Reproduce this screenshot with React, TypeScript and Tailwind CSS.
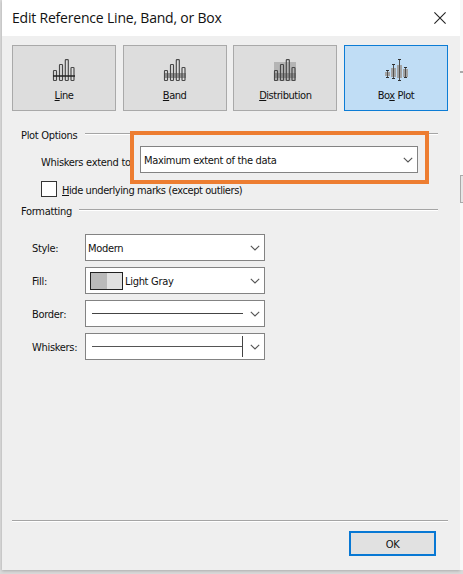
import type { ReactNode } from 'react';

type Kind = 'line' | 'band' | 'distribution' | 'box';

function ChartIcon({ kind }: { kind: Kind }) {
  if (kind === 'box') {
    const boxes = [
      [1, 11, 19, 13, 17],
      [7, 5, 20, 9, 18],
      [13, 0, 22, 6, 19],
      [19, 8, 19, 10, 18],
    ];
    return (
      <svg width="24" height="23" viewBox="0 0 24 23" shapeRendering="crispEdges">
        {boxes.map(([x, top, bottom, a, b]) => (
          <g key={x}>
            <rect x={x} y={a} width="5" height={b - a} fill="#a3a3a3" />
            <path d={`M${x + 2.5} ${top}V${bottom}`} stroke="#505050" />
            <path d={`M${x + 1} ${top + 0.5}h3M${x + 1} ${bottom - 0.5}h3`} stroke="#303030" />
          </g>
        ))}
      </svg>
    );
  }
  return (
    <svg width="24" height="23" viewBox="0 0 24 23" fill="none">
      {kind === 'distribution' && (
        <>
          <path d="M1 3h22v11H1z" fill="#b5b5b5" />
          <path d="M1 14h22v5H1z" fill="#8b8b8b" />
          <path d="M1 19h22v3H1z" fill="#b5b5b5" />
        </>
      )}
      {kind === 'band' && <path d="M1 14h22v5H1z" fill="#929292" />}
      <g stroke="#484848" strokeWidth="1.15">
        <rect x="1.5" y="11.5" width="3" height="10" rx=".7" />
        <rect x="7.5" y="5.5" width="3" height="16" rx=".7" />
        <rect x="13.3" y="0.6" width="3" height="20.9" rx=".7" />
        <rect x="19" y="8.5" width="3" height="13" rx=".7" />
      </g>
      {kind === 'line' && <path d="M1 17h22" stroke="#222" strokeWidth="1.5" />}
    </svg>
  );
}

function TypeButton({ kind, selected, children }: { kind: Kind; selected?: boolean; children: ReactNode }) {
  return (
    <button
      className={`flex h-[66px] w-[104px] flex-col items-center border pt-[13px] ${
        selected ? 'border-[#0c7cd5] bg-[#c0ddf5]' : 'border-[#a9a9a9] bg-[#dddddd]'
      }`}
    >
      <ChartIcon kind={kind} />
      <span className="mt-[6px] leading-[16px] tracking-[-0.45px]">{children}</span>
    </button>
  );
}

function Chevron() {
  return (
    <svg className="shrink-0" width="10" height="6" viewBox="0 0 10 6" fill="none">
      <path d="M.8.8 5 5 9.2.8" stroke="#555" strokeWidth="1.1" />
    </svg>
  );
}

function Select({ children }: { children: ReactNode }) {
  return (
    <div className="flex h-[27px] w-[180px] items-center border border-[#838383] bg-white pr-1">
      <div className="flex h-full flex-1 items-center whitespace-nowrap">{children}</div>
      <Chevron />
    </div>
  );
}

function Divider() {
  return <div className="-mt-[5px] h-[2px] flex-1 border-t border-[#a5a5a5] bg-white" />;
}

function Field({ label, children }: { label: string; children: ReactNode }) {
  return (
    <div className="flex items-center">
      <span className="w-[53px] whitespace-nowrap pt-[3px]">{label}</span>
      <Select>{children}</Select>
    </div>
  );
}

export default function App() {
  return (
    <div className="flex h-[574px] w-[463px] overflow-hidden bg-[#dadada] pl-[2px] font-['DejaVu_Sans_Condensed','DejaVu_Sans',sans-serif] text-[11px] leading-[16px] tracking-[-0.3px] text-[#111]">
      <div className="flex h-[570px] w-[458px] shrink-0 flex-col bg-[#efefef] shadow-[0_1px_3px_#aaa]">
        <header className="flex h-[36px] shrink-0 items-center justify-between bg-white pl-[10px] pr-[14px]">
          <h1 className="whitespace-nowrap font-['Open_Sans',sans-serif] text-[14px] leading-[20px] tracking-[-0.2px]">
            Edit Reference Line, Band, or Box
          </h1>
          <svg width="12" height="12" viewBox="0 0 12 12">
            <path d="m.4.4 11.2 11.2M11.6.4.4 11.6" stroke="#222" strokeWidth="1.1" />
          </svg>
        </header>

        <div className="ml-[10px] mt-[9px] flex w-[436px] justify-between self-start font-stretch-condensed">
          <TypeButton kind="line"><u>L</u>ine</TypeButton>
          <TypeButton kind="band"><u>B</u>and</TypeButton>
          <TypeButton kind="distribution"><u>D</u>istribution</TypeButton>
          <TypeButton kind="box" selected>Bo<u>x</u> Plot</TypeButton>
        </div>

        <main className="font-stretch-condensed">
          <div className="ml-[19px] mt-[17px] flex w-[417px] items-center">
            <span className="w-[64px] whitespace-nowrap">Plot Options</span>
            <Divider />
          </div>

          <div className="-mt-[13px] ml-[39px] flex h-[52px] items-center">
            <span className="w-[89px] whitespace-nowrap pt-[11px]">Whiskers extend to</span>
            <div className="flex h-[53px] w-[299px] items-center border-[4px] border-[#ed7d31] pl-[6px] pt-[5px]">
              <div className="flex h-[27px] w-[278px] items-center justify-between border border-[#838383] bg-white pl-[3px] pr-1">
                <span className="whitespace-nowrap pt-[3px] tracking-[-0.34px]">Maximum extent of the data</span>
                <Chevron />
              </div>
            </div>
          </div>

          <label className="-mt-[2px] ml-[39px] flex h-[16px] items-center">
            <span className="size-[16px] border border-[#333] bg-white" />
            <span className="ml-[5px] whitespace-nowrap pt-[3px] tracking-[-0.42px]"><u>H</u>ide underlying marks (except outliers)</span>
          </label>

          <div className="ml-[19px] mt-[7px] flex w-[417px] items-center">
            <span className="w-[58px] whitespace-nowrap">Formatting</span>
            <Divider />
          </div>

          <div className="ml-[30px] mt-[14px] flex flex-col gap-[6px]">
            <Field label="Style:"><span className="pl-[2px] pt-[2px]">Modern</span></Field>
            <Field label="Fill:">
              <span className="ml-[4px] mr-[2px] flex h-[18px] w-[33px] border border-[#222]">
                <i className="flex-1 bg-[#bababa]" /><i className="flex-1 bg-[#e1e1e1]" />
              </span>
              <span className="pt-[2px]">Light Gray</span>
            </Field>
            <Field label="Border:"><span className="ml-[6px] h-px w-[151px] bg-[#444]" /></Field>
            <Field label="Whiskers:">
              <span className="ml-[6px] h-px w-[150px] bg-[#555]" />
              <span className="h-[21px] w-px bg-[#444]" />
            </Field>
          </div>
        </main>

        <footer className="ml-[10px] mt-auto h-[50px] w-[436px] border-t border-[#a5a5a5] font-stretch-condensed">
          <div className="h-px bg-white" />
          <button className="ml-[337px] mt-[9px] flex h-[25px] w-[87px] items-center justify-center border-2 border-[#0878d4] bg-[#e1e1e1] pt-[2px]">OK</button>
        </footer>
      </div>
      <div className="flex h-[570px] flex-1 flex-col bg-[#f8f8f8]">
        <span className="mt-[71px] h-[2px] bg-[#aaa]" />
        <span className="mt-[102px] h-[28px] border-y border-l border-[#a9a9a9] bg-[#e6e6e6]" />
      </div>
    </div>
  );
}
